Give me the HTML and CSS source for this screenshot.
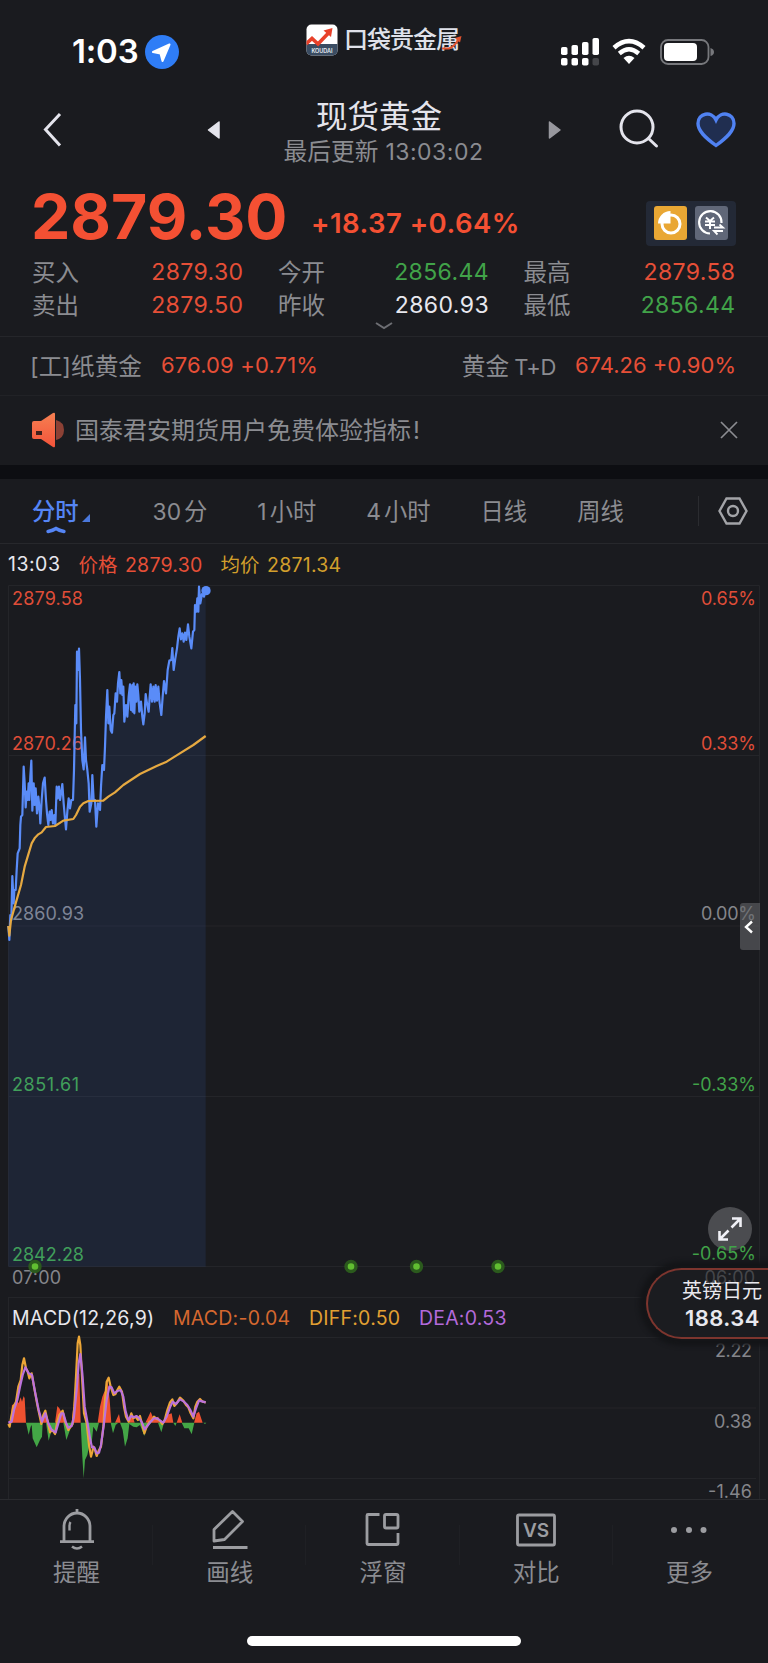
FILE: index.html
```html
<!DOCTYPE html>
<html lang="zh-CN">
<head>
    <meta charset="UTF-8">
    <meta name="viewport" content="width=device-width, initial-scale=1.0">
    <title>现货黄金</title>
    <link rel="stylesheet" href="styles.css">
</head>

<body>
    <div class="app">
        <!-- 状态栏 -->
        <div class="status">
            <div class="status-left">
                <span class="time">1:03</span>
                <svg width="34" height="34" viewBox="0 0 34 34"><circle cx="17" cy="17" r="17" fill="#2f7df6"/><path d="M24.500 9.500 L8 17 L15.500 18.500 L17.500 26 Z" fill="#fff" stroke="#fff" stroke-width="2" stroke-linejoin="round"/></svg>
            </div>
            <div class="brand">
                <svg width="32" height="32" viewBox="0 0 32 32">
                    <clipPath id="logo"><rect x=".5" y=".5" width="31" height="31" rx="5"/></clipPath>
                    <g clip-path="url(#logo)">
                        <rect width="32" height="32" fill="#fff"/>
                        <rect y="20" width="32" height="12" fill="#3a4c62"/>
                        <path d="M0 20 L6 14.500 L12 20 L22.500 9" fill="none" stroke="#e8412a" stroke-width="3.600"/>
                        <path d="M17.500 6.500 L26.500 4 L25 13 Z" fill="#e8412a"/>
                        <text x="16" y="28.500" text-anchor="middle" font-size="5.500" font-weight="600" fill="#e8edf3">KOUDAI</text>
                    </g>
                </svg>
                <span class="brand-name">口袋贵金属</span>
                <svg class="brand-tail" width="22" height="14" viewBox="0 0 22 14"><path d="M1 12.500 H8 Q13 11 18 3" fill="none" stroke="#e0532f" stroke-width="2.200"/><path d="M14 2 L20.500 0 L19 6.500 Z" fill="#e0532f"/></svg>
            </div>
            <div class="status-right">
                <svg width="39" height="28" viewBox="0 0 39 28" fill="#fff">
                    <rect x="0" y="9" width="6.500" height="8" rx="1.800"/><rect x="10.500" y="7" width="6.500" height="10" rx="1.800"/><rect x="21" y="4" width="6.500" height="13" rx="1.800"/><rect x="31.500" y="0" width="6.500" height="17" rx="1.800"/>
                    <rect x="0" y="20" width="6.500" height="7.500" rx="1.800"/><rect x="10.500" y="20" width="6.500" height="7.500" rx="1.800"/><rect x="21" y="20" width="6.500" height="7.500" rx="1.800"/><rect x="31.500" y="20" width="6.500" height="7.500" rx="1.800" fill="#45464a"/>
                </svg>
                <svg width="34" height="26" viewBox="0 0 34 26">
                    <path d="M2 8.700 Q17 -4.500 32 8.700" fill="none" stroke="#fff" stroke-width="4.600"/>
                    <path d="M7.300 14.500 Q17 6 26.700 14.500" fill="none" stroke="#fff" stroke-width="4.400"/>
                    <path d="M11.500 19 Q17 14.500 22.500 19 L17 25 Z" fill="#fff"/>
                </svg>
                <svg width="55" height="26" viewBox="0 0 55 26">
                    <rect x="1" y="1" width="47.500" height="24" rx="7" fill="none" stroke="#77787c" stroke-width="1.800"/>
                    <rect x="4" y="4" width="33" height="18" rx="4" fill="#fff"/>
                    <path d="M50.500 9 Q54 10 54 13 Q54 16 50.500 17 Z" fill="#77787c"/>
                </svg>
            </div>
        </div>

        <!-- 标题 -->
        <div class="header">
            <svg class="back" width="20" height="36" viewBox="0 0 20 36"><path d="M17 2 L2.500 17.500 L17 33.500" fill="none" stroke="#e4e4ec" stroke-width="3"/></svg>
            <svg class="prev" width="14" height="20" viewBox="0 0 14 20"><path d="M1.500 10 L12 2 V18 Z" fill="#e4e4ec" stroke="#e4e4ec" stroke-width="1.500" stroke-linejoin="round"/></svg>
            <div class="title">
                <h1>现货黄金</h1>
                <p>最后更新 <span class="num">13:03:02</span></p>
            </div>
            <svg class="next" width="14" height="20" viewBox="0 0 14 20"><path d="M12 10 L1.500 2 V18 Z" fill="#98989e" stroke="#98989e" stroke-width="1.500" stroke-linejoin="round"/></svg>
            <svg class="search" width="40" height="40" viewBox="0 0 40 40" fill="none" stroke="#e4e4ec" stroke-width="3"><circle cx="18" cy="18" r="16"/><path d="M29.500 29.500 L37.500 37" stroke-linecap="round"/></svg>
            <svg class="fav" width="40" height="36" viewBox="0 0 40 36"><path d="M20 33.500 C9 25.500 2 19 2 11.500 C2 1 15.500 -1.500 20 8 C24.500 -1.500 38 1 38 11.500 C38 19 31 25.500 20 33.500 Z" fill="#202e50" stroke="#5082f2" stroke-width="3.400"/></svg>
        </div>

        <!-- 行情 -->
        <div class="quote">
            <div class="quote-main">
                <span class="price">2879.30</span>
                <span class="change">+18.37 +0.64%</span>
                <div class="tools">
                    <svg width="33" height="34" viewBox="0 0 33 34">
                        <rect width="33" height="34" rx="3" fill="#e9a734"/>
                        <circle cx="17" cy="18" r="9" fill="none" stroke="#fff" stroke-width="3"/>
                        <path d="M16.500 17.500 V5 A12.500 12.500 0 0 0 4 17.500 Z" fill="#fff"/>
                    </svg>
                    <svg width="33" height="34" viewBox="0 0 33 34" fill="none" stroke="#fff" stroke-width="2.200">
                        <rect width="33" height="34" rx="3" fill="#606778" stroke="none"/>
                        <path d="M15 27.500 A11.200 11.200 0 1 1 26.500 17"/>
                        <path d="M11 11.500 L15 15 L19 11.500 M10 15.500 H20 M10 19 H20 M15 15 V23" stroke-width="2"/>
                        <path d="M19 21.500 H28 L24.500 18.500 M28 25 H19 L22.500 28.500" stroke-width="1.800"/>
                    </svg>
                </div>
            </div>
            <div class="quote-grid">
                <div class="cell"><span>买入</span><b class="red">2879.30</b></div>
                <div class="cell"><span>今开</span><b class="green">2856.44</b></div>
                <div class="cell"><span>最高</span><b class="red">2879.58</b></div>
                <div class="cell"><span>卖出</span><b class="red">2879.50</b></div>
                <div class="cell"><span>昨收</span><b class="white">2860.93</b></div>
                <div class="cell"><span>最低</span><b class="green">2856.44</b></div>
            </div>
            <svg class="more-arrow" width="18" height="8" viewBox="0 0 18 8"><path d="M1 1 L9 6 L17 1" fill="none" stroke="#6d6e73" stroke-width="2"/></svg>
        </div>

        <div class="related">
            <div class="related-item"><span>[工]纸黄金</span><b>676.09 +0.71%</b></div>
            <div class="related-item td"><span>黄金<i>T+D</i></span><b>674.26 +0.90%</b></div>
        </div>

        <div class="notice">
            <svg width="33" height="36" viewBox="0 0 33 36">
                <defs><linearGradient id="horn" x1="0" y1="0" x2="0" y2="1"><stop offset="0" stop-color="#f58052"/><stop offset="1" stop-color="#f4533a"/></linearGradient></defs>
                <path d="M24 8 Q32 10 32 18 Q32 26 24 28 Z" fill="#8c4135"/>
                <path d="M2 9 H9 L21 1 Q23 0 23 2 V34 Q23 36 21 35 L9 27 H2 Q0 27 0 25 V11 Q0 9 2 9 Z" fill="url(#horn)"/>
                <rect x="4" y="19" width="6" height="4" fill="#40201c"/>
            </svg>
            <p>国泰君安期货用户免费体验指标<i>!</i></p>
            <svg class="close" width="18" height="18" viewBox="0 0 18 18"><path d="M1 1 L17 17 M17 1 L1 17" stroke="#8b8c91" stroke-width="1.700"/></svg>
        </div>

        <!-- 周期 -->
        <div class="tabs">
            <div class="tab active">分时
                <svg class="corner" width="8" height="8" viewBox="0 0 8 8"><path d="M8 0 V8 H0 Z" fill="#4a78dc"/></svg>
                <svg class="mark" width="20" height="8" viewBox="0 0 20 8"><path d="M2 5.500 Q7 4.500 10 2.500 Q13 4.500 18 5.500" fill="none" stroke="#5585f5" stroke-width="3.400" stroke-linecap="round"/></svg>
            </div>
            <div class="tab"><span class="num">30</span>分</div>
            <div class="tab"><span class="num">1</span>小时</div>
            <div class="tab"><span class="num">4</span>小时</div>
            <div class="tab">日线</div>
            <div class="tab">周线</div>
            <div class="setting">
                <svg width="30" height="28" viewBox="0 0 30 28" fill="none" stroke="#a3a4a8" stroke-width="2.400"><path d="M8.500 1.500 H21.500 L28.500 14 L21.500 26.500 H8.500 L1.500 14 Z"/><circle cx="15" cy="14" r="5"/></svg>
            </div>
        </div>

        <div class="legend">
            <span class="white now">13:03</span>
            <span class="red">价格 <em>2879.30</em></span>
            <span class="yellow">均价 <em>2871.34</em></span>
        </div>

        <!-- 分时图 -->
        <div class="chart">
            <svg width="768" height="713" viewBox="0 0 768 713">
                <path class="grid" d="M8.500 .5 H759.500 V681.500 H8.500 Z M8 170.500 H760 M8 341 H760 M8 511.500 H760"/>
                <g class="axis">
                    <text class="f-red" x="12" y="20" textLength="71">2879.58</text>
                    <text class="f-red" x="12" y="165" textLength="71">2870.26</text>
                    <text class="f-gray" x="12" y="335" textLength="72">2860.93</text>
                    <text class="f-green" x="12" y="505.500" textLength="67">2851.61</text>
                    <text class="f-green" x="12" y="675.500" textLength="72">2842.28</text>
                    <text class="f-gray" x="12" y="699" textLength="49">07:00</text>
                    <text class="f-red end" x="756" y="20" textLength="55">0.65%</text>
                    <text class="f-red end" x="756" y="165" textLength="55">0.33%</text>
                    <text class="f-gray end" x="756" y="335" textLength="55">0.00%</text>
                    <text class="f-green end" x="756" y="505.500" textLength="64">-0.33%</text>
                </g>
                <g transform="translate(0 -15) scale(.33333)">
                    <path class="area" d="M25 1068 L28 1110 31 1035 34 1050 37 918 41 1000 43 960 47 960 50 900 53 850 59 835 61 765 63 740 67 735 71 590 74 640 77 712 80 665 83 690 86 640 88 690 91 620 94 572 97 722 101 640 107 655 111 730 121 760 129 640 134 623 141 730 145 765 155 720 166 765 170 650 180 690 187 642 198 778 206 685 219 690 226 405 231 245 237 236 243 480 251 598 255 502 262 600 269 725 277 615 289 770 294 700 300 720 307 585 312 600 318 440 322 360 336 488 347 370 358 306 367 375 373 455 390 343 403 430 412 343 430 463 437 372 446 425 452 343 484 435 492 333 498 370 508 272 517 234 521 300 539 175 551 215 564 163 574 235 583 180 585 105 597 50 606 72 617 62 L617 2090 H25 Z"/>
                    <polyline class="line-price" points="25,1068 28,1110 31,1035 34,1050 37,918 41,1000 43,960 47,960 50,900 53,850 59,835 61,765 63,740 67,735 71,590 74,640 77,712 80,665 83,690 86,640 88,690 91,620 94,572 97,722 101,640 104,705 107,655 111,730 115,680 118,710 121,760 125,690 129,640 134,623 138,690 141,730 145,765 149,725 152,750 155,720 159,760 163,735 166,765 170,650 173,685 177,650 180,690 184,665 187,642 191,700 194,735 198,778 202,725 206,685 210,715 214,690 219,690 222,600 224,500 226,405 229,460 231,245 234,300 237,236 240,330 243,480 247,570 251,598 255,502 258,570 262,600 266,640 269,725 274,700 277,615 281,690 285,690 289,770 294,700 300,720 303,650 307,585 312,600 315,530 318,440 322,360 325,460 328,410 332,480 336,488 340,435 343,430 347,370 351,395 354,340 358,306 361,370 364,330 367,375 370,350 373,455 378,405 382,440 386,380 390,343 393,420 397,345 398,425 401,340 403,430 406,350 409,395 412,343 415,375 418,425 423,395 427,440 430,463 434,430 437,372 441,400 446,425 449,380 452,343 456,395 460,350 464,395 467,345 471,392 475,350 479,400 484,435 488,380 492,333 498,370 503,300 508,272 514,270 517,234 521,300 526,265 531,235 535,200 539,175 543,208 547,190 551,215 555,188 559,210 564,163 568,200 574,235 579,185 583,180 585,105 589,125 592,85 595,125 597,50 601,100 606,72 612,80 616,62"/>
                    <polyline class="line-avg" points="25,1068 28,1097 33,1050 47,1000 63,945 74,890 83,860 95,820 105,803 115,793 125,787 138,771 165,768 190,752 220,747 228,735 240,710 250,700 265,693 310,692 325,680 345,667 370,645 420,612 470,588 500,575 530,556 580,525 617,498"/>
                    <circle cx="618" cy="62" r="14" fill="#5a8cf8"/>
                </g>
                <g class="dots">
                    <circle cx="35" cy="681.500" r="5"/><circle cx="351" cy="681.500" r="5"/><circle cx="416.500" cy="681.500" r="5"/><circle cx="498" cy="681.500" r="5"/>
                </g>
                <path class="grid" d="M8 712.500 H760"/>
            </svg>
            <div class="drawer"><svg width="10" height="14" viewBox="0 0 10 14"><path d="M8 1.500 L2 7 L8 12.500" fill="none" stroke="#fff" stroke-width="2.400"/></svg></div>
            <div class="expand"><svg width="26" height="26" viewBox="0 0 26 26" fill="none" stroke="#f0f0f6" stroke-width="2.600"><path d="M15 2.500 H23.500 V11 M23.500 2.500 L14.500 11.500 M2.500 15 V23.500 H11 M2.500 23.500 L11.500 14.500"/></svg></div>
            <div class="low">-0.65%</div>
            <div class="float">
                <span class="float-time">06:00</span>
                <p>英镑日元</p>
                <b>188.34</b>
            </div>
        </div>

        <!-- MACD -->
        <div class="macd">
            <div class="macd-legend">
                <span class="white">MACD(12,26,9)</span>
                <span class="orange">MACD:-0.04</span>
                <span class="amber">DIFF:0.50</span>
                <span class="purple">DEA:0.53</span>
            </div>
            <svg width="768" height="162" viewBox="0 0 768 162">
                <path class="grid" d="M8 .5 H760 M8 71 H756 M8 141.500 H756 M8.500 0 V162 M759.500 0 V162"/>
                <g class="axis f-gray">
                    <text class="end" x="752" y="20" textLength="37">2.22</text>
                    <text class="end" x="752" y="90.500" textLength="38">0.38</text>
                    <text class="end" x="752" y="161" textLength="44">-1.46</text>
                </g>
                <g transform="translate(0 -137) scale(.33333)">
                    <path fill="#ee5130" d="M30 668 36 615 44 612 50 600 56 610 62 592 66 605 71 588 74 595 78 668Z M126 668 132 645 140 650 146 668Z M165 668 172 618 178 625 186 640 192 645 200 668Z M215 668 222 600 228 590 234 530 238 520 242 668Z M293 668 300 620 307 590 313 575 320 570 321 530 325 560 329 600 334 668Z M345 668 357 642 362 668Z M385 668 395 640 404 668Z M436 668 445 650 452 635 460 655 475 650 480 668Z M490 668 500 645 515 640 520 668Z M530 668 539 643 547 668Z M582 668 590 640 597 635 608 668Z"/>
                    <path fill="#43a646" d="M78 668 86 704 92 680 95 675 98 715 110 742 120 720 126 710 128 668Z M138 668 146 722 155 690 166 695 170 668Z M190 668 199 720 210 690 218 668Z M242 668 247 770 251 835 255 780 262 765 268 735 275 730 280 680 290 695 297 668Z M332 668 339 700 347 675 355 668Z M360 668 368 690 375 740 383 715 388 672 400 680 410 682 420 675 433 708 440 680 455 668Z M474 668 484 697 492 668Z M520 668 526 678 530 668Z M545 668 553 685 566 685 575 703 583 668Z M610 668 615 672 619 668Z"/>
                    <polyline class="line-diff" points="25,672 29,680 33,655 40,620 48,605 55,560 62,540 67,495 72,475 78,505 83,515 88,535 95,520 102,560 112,615 124,672 130,645 136,632 142,660 150,697 157,690 165,702 172,665 178,645 188,632 195,665 205,690 212,680 218,672 223,620 228,530 233,430 237,410 241,435 246,530 252,640 260,670 267,735 273,770 277,755 280,740 285,750 290,768 297,750 303,740 310,680 315,600 320,545 326,533 332,560 340,585 346,583 352,570 358,560 366,575 372,620 378,650 386,665 394,640 400,655 406,650 414,660 420,648 427,675 433,700 440,680 448,665 455,662 462,650 470,657 478,660 487,672 494,660 502,630 510,607 517,598 523,618 530,610 540,593 550,602 558,615 565,622 572,640 580,655 586,620 592,605 600,597 608,605 617,607"/>
                    <polyline class="line-dea" points="25,668 35,665 42,630 52,600 60,560 68,525 76,502 86,520 96,525 105,575 116,630 126,665 136,640 145,670 155,690 167,697 175,670 184,640 190,640 198,668 205,683 215,678 222,650 230,570 236,490 241,462 247,520 254,620 263,670 270,715 276,742 283,742 290,760 297,758 303,735 312,670 320,600 328,560 335,562 343,580 352,573 362,570 370,590 377,635 385,660 394,648 402,652 410,648 418,655 426,668 434,688 442,678 452,665 462,655 472,655 482,663 490,668 500,650 510,622 518,605 528,612 540,598 552,605 562,615 572,632 580,650 588,625 597,602 606,604 617,607"/>
                </g>
            </svg>
        </div>

        <!-- 底部菜单 -->
        <div class="menu">
            <div class="menu-item">
                <svg width="42" height="44" viewBox="0 0 42 44" fill="none" stroke="#9c9da1" stroke-width="2.800"><path d="M8 33 V18.500 A13 13.500 0 0 1 34 18.500 V33 M4 33.700 H38 M21 1 V5"/><path d="M13.500 22.500 V18 Q13.500 15.500 14.500 14" stroke-width="2.400"/><path d="M16 38.500 Q21 42.500 26 38.500" stroke-width="2.600"/></svg>
                <span>提醒</span>
            </div>
            <div class="menu-item">
                <svg width="42" height="44" viewBox="0 0 42 44" fill="none" stroke="#9c9da1" stroke-width="2.800" stroke-linejoin="round"><path d="M23.500 3.500 L33.500 13.500 L15.500 31.500 L5 33 V21.500 Z M4 39.500 H38.500"/></svg>
                <span>画线</span>
            </div>
            <div class="menu-item">
                <svg width="42" height="44" viewBox="0 0 42 44" fill="none" stroke="#9c9da1" stroke-width="2.800"><path d="M17.500 6.500 H6 Q5 6.500 5 7.500 V35.500 Q5 36.500 6 36.500 H35 Q36 36.500 36 35.500 V25"/><rect x="22.500" y="6.500" width="13.500" height="13.500" rx="1.500"/></svg>
                <span>浮窗</span>
            </div>
            <div class="menu-item">
                <svg width="42" height="44" viewBox="0 0 42 44"><rect x="2.500" y="7" width="37" height="30" rx="1.500" fill="none" stroke="#9c9da1" stroke-width="2.800"/><text x="21" y="29" text-anchor="middle" font-size="19" font-weight="600" fill="#9c9da1">VS</text></svg>
                <span>对比</span>
            </div>
            <div class="menu-item">
                <svg width="42" height="44" viewBox="0 0 42 44" fill="#9c9da1"><circle cx="6" cy="22" r="3"/><circle cx="21" cy="22" r="3"/><circle cx="35.500" cy="22" r="3"/></svg>
                <span>更多</span>
            </div>
        </div>
        <div class="home-bar"></div>
    </div>
</body>
</html>
```
FILE: styles.css
```css
body,div,p,h1,svg {
    margin: 0;
    padding: 0;
}
body{
    background: #1a1b1f;
    font-family: Inter, "Noto Sans CJK SC", sans-serif;
    font-weight: 400;
    color: #8b8c91;
}
svg{
    display: block;
    flex: none;
    overflow: visible;
}
b,i,em{
    font-weight: 400;
    font-style: normal;
}
.app{
    width: 768px;
    height: 1663px;
    overflow: hidden;
    display: flex;
    flex-direction: column;
}
.red{ color: #e64f37; }
.green{ color: #41a349; }
.white{ color: #e8e8ee; }
.yellow{ color: #d29f2c; }
.orange{ color: #d5682f; }
.amber{ color: #e2a032; }
.purple{ color: #b36adb; }

/* 状态栏 */
.status{
    height: 92px;
    display: grid;
    grid-template-columns: 306px 1fr 207px;
    box-sizing: border-box;
}
.status-left{
    display: flex;
    align-items: center;
    gap: 8px;
    padding: 11px 0 0 72px;
}
.time{
    font-size: 33px;
    font-weight: 600;
    line-height: 36px;
    color: #fff;
    width: 65px;
    letter-spacing: -.2px;
    margin-top: -2px;
}
.brand{
    display: flex;
    align-items: center;
    height: 80px;
    position: relative;
}
.brand-name{
    margin-left: 6px;
    font-size: 24px;
    font-weight: 500;
    line-height: 30px;
    color: #dfe1ea;
    letter-spacing: -1px;
}
.brand-tail{
    position: absolute;
    left: 135px;
    top: 36px;
}
.status-right{
    display: flex;
    align-items: center;
    padding-top: 11px;
}
.status-right svg:nth-child(2){ margin-left: 12px; }
.status-right svg:nth-child(3){ margin-left: 14px; }

/* 标题 */
.header{
    height: 88px;
    display: flex;
    align-items: flex-start;
}
.back{ margin: 20px 0 0 43px; }
.prev{ margin: 28px 0 0 144px; }
.title{
    width: 328px;
    text-align: center;
}
.title h1{
    font-size: 31.5px;
    font-weight: 400;
    line-height: 40px;
    padding: 5px 12px 0 0;
    color: #e4e4ec;
}
.title p{
    font-size: 23.7px;
    line-height: 29px;
    white-space: nowrap;
    padding-right: 3px;
    letter-spacing: .1px;
}
.title .num{
    font-size: 23px;
    letter-spacing: .5px;
}
.next{ margin: 28px 0 0 -1px; }
.search{ margin: 17px 0 0 57px; }
.fav{ margin: 20px 0 0 37px; }

/* 行情 */
.quote{
    height: 156px;
    border-bottom: 1px solid #25262a;
    position: relative;
}
.quote-main{
    display: flex;
    align-items: center;
    height: 75px;
    padding: 0 32px 0 31px;
}
.price{
    width: 280px;
    font-size: 62.5px;
    font-weight: 700;
    line-height: 70px;
    color: #f45033;
    padding-bottom: 3px;
}
.change{
    font-size: 27.5px;
    font-weight: 600;
    color: #f45033;
    padding-top: 10px;
    letter-spacing: .45px;
}
.tools{
    display: flex;
    gap: 8px;
    margin: 12px 0 0 auto;
    padding: 5px 8px 6px;
    background: #232936;
    border-radius: 4px;
}
.quote-grid{
    display: grid;
    grid-template-columns: 211.5px 211px 212px;
    column-gap: 34.5px;
    padding: 0 32px 0 32px;
}
.cell{
    display: flex;
    justify-content: space-between;
    align-items: center;
    height: 33.5px;
    font-size: 23.5px;
}
.cell span{ margin-top: -2px; }
.cell b{
    font-size: 23px;
    letter-spacing: .4px;
}
.more-arrow{
    position: absolute;
    left: 375px;
    bottom: 6px;
}
.related{
    display: flex;
    justify-content: space-between;
    align-items: center;
    height: 55px;
    padding: 0 32px 3px 30px;
    border-bottom: 1px solid #212226;
    font-size: 23.7px;
}
.related-item{
    display: flex;
    align-items: center;
}
.related-item b{
    margin-left: 19px;
    font-size: 22px;
    letter-spacing: .15px;
    color: #e64f37;
}
.related-item.td b{
    letter-spacing: 0;
}
.related-item i{
    margin-left: 5px;
    font-size: 22px;
    letter-spacing: -.4px;
}
.notice{
    display: flex;
    align-items: center;
    height: 69px;
    padding: 0 30px 0 32px;
    border-bottom: 14px solid #0d0e12;
}
.notice svg{ margin-top: -1px; }
.notice p{
    margin: -4px 0 0 10px;
    font-size: 24px;
}
.notice i{ margin-left: 2px; }
.notice .close{ margin-left: auto; }

/* 周期 */
.tabs{
    display: flex;
    align-items: center;
    height: 64px;
    padding-left: 32px;
    border-bottom: 1px solid #27282c;
    font-size: 23.3px;
}
.tab{
    margin: -2px 50px 0 0;
    white-space: nowrap;
}
.tab .num{
    margin-right: 3px;
    font-size: 22.8px;
}
.tab.active{
    position: relative;
    color: #5585f5;
    font-weight: 500;
    margin-right: 74px;
}
.corner{
    position: absolute;
    left: 50px;
    bottom: 5px;
}
.mark{
    position: absolute;
    left: 14px;
    bottom: -7px;
}
.setting{
    margin-left: auto;
    padding: 1px 20px 1px 19px;
    border-left: 1px solid #2b2c30;
}
.legend{
    display: flex;
    align-items: center;
    gap: 18px;
    height: 39px;
    padding: 0 0 2px 8px;
    font-size: 19.5px;
}
.legend .now{ letter-spacing: .5px; }
.legend em{
    margin-left: 2px;
    letter-spacing: .25px;
}

/* 分时图 */
.chart{
    position: relative;
    height: 713px;
}
.grid{
    fill: none;
    stroke: #242529;
    stroke-width: 1;
}
.axis{ font-size: 18px; }
.end{ text-anchor: end; }
.f-red{ fill: #df4d38; }
.f-gray{ fill: #85868b; }
.f-green{ fill: #41a349; }
.area{ fill: rgba(70, 125, 255, .1); }
.line-price,.line-avg,.line-diff,.line-dea{
    fill: none;
    stroke-width: 6.6;
    stroke-linejoin: round;
}
.line-price{ stroke: #5a8cf8; }
.line-avg{ stroke: #e6a941; }
.line-diff{ stroke: #eca637; }
.line-dea{ stroke: #bc72dc; }
.dots circle{
    fill: #61bd31;
    stroke: #2b5a1d;
    stroke-width: 3.4;
}
.drawer{
    position: absolute;
    right: 8px;
    top: 318px;
    width: 20px;
    height: 47px;
    padding-right: 2px;
    box-sizing: border-box;
    background: rgba(100, 101, 105, .6);
    border-radius: 3px 0 0 3px;
    display: flex;
    align-items: center;
    justify-content: center;
}
.expand{
    position: absolute;
    right: 16px;
    top: 622px;
    width: 44px;
    height: 44px;
    border-radius: 50%;
    background: #4b4c50;
    display: flex;
    align-items: center;
    justify-content: center;
}
.low{
    position: absolute;
    right: 12px;
    top: 657px;
    font-size: 18px;
    line-height: 24px;
    color: #41a349;
    letter-spacing: .1px;
}
.float{
    position: absolute;
    right: -4px;
    top: 683px;
    width: 126px;
    height: 71px;
    box-sizing: border-box;
    padding: 8px 10px 0 0;
    border: 2.5px solid #7d352e;
    border-right: 0;
    border-radius: 36px 0 0 36px;
    background: #1b1c20;
    box-shadow: 0 0 4px 7px #141518;
    text-align: right;
    color: #e8e8ee;
    z-index: 2;
}
.float p{
    position: relative;
    font-size: 20px;
    line-height: 27px;
}
.float b{
    display: block;
    font-size: 22px;
    font-weight: 600;
    line-height: 26px;
    padding-right: 2px;
    letter-spacing: .5px;
}
.float-time{
    position: absolute;
    right: 17px;
    top: -3px;
    font-size: 18px;
    line-height: 22px;
    color: #45464a;
}

/* MACD */
.macd{
    height: 201px;
}
.macd-legend{
    display: flex;
    align-items: center;
    gap: 18.5px;
    height: 39px;
    margin-left: 8px;
    padding-left: 3px;
    border-left: 1px solid #242529;
    font-size: 19.5px;
    letter-spacing: .24px;
}

/* 底部菜单 */
.menu{
    display: flex;
    height: 94px;
    margin-right: 2px;
    border-top: 1px solid #2a2b2f;
}
.menu-item{
    flex: 1;
    display: flex;
    flex-direction: column;
    align-items: center;
    padding-top: 8px;
    font-size: 23.5px;
    line-height: 34px;
    background: linear-gradient(#1f2024, #1f2024) right 25px / 1px 40px no-repeat;
}
.menu-item span{ margin-top: 4px; }
.menu-item:last-child{ background: none; }
.home-bar{
    width: 274px;
    height: 10px;
    margin: 42px auto 0;
    border-radius: 5px;
    background: #fff;
}
```
